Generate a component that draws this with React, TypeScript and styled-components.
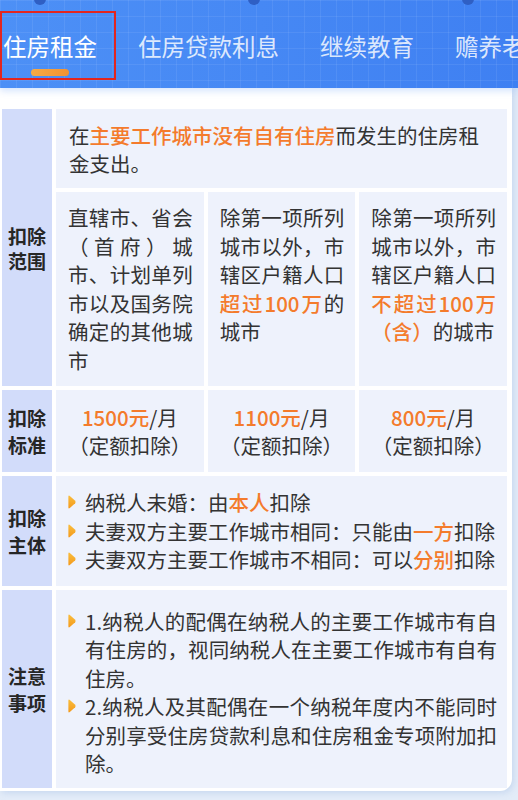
import React from 'react';
import styled, { createGlobalStyle } from 'styled-components';

const Global = createGlobalStyle`
  html, body { margin: 0; padding: 0; background: #e3ecf8; }
  body { font-family: "Noto Sans CJK SC", "Noto Sans", sans-serif; color: #333333; }
  * { box-sizing: border-box; }
`;

const Page = styled.div`
  width: 518px;
  height: 800px;
  overflow: hidden;
  position: relative;
  background: #e3ecf8;
`;

const Header = styled.header`
  position: relative;
  height: 88px;
  overflow: hidden;
  z-index: 1;
  background-color: #4285f4;
  background-image:
    linear-gradient(rgba(255, 255, 255, 0.07) 1px, transparent 1px),
    linear-gradient(90deg, rgba(255, 255, 255, 0.07) 1px, transparent 1px),
    linear-gradient(90deg, #4d90f6, #3f80f2);
  background-size: 16px 16px, 16px 16px, 100% 100%;
  box-shadow: 0 3px 7px rgba(66, 133, 244, 0.22);
`;

const Ring = styled.span<{ $left: number }>`
  position: absolute;
  top: -7px;
  left: ${(p) => p.$left}px;
  width: 12px;
  height: 12px;
  border-radius: 50%;
  background: #2f5fc4;
`;

const TabList = styled.nav`
  display: flex;
  gap: 41px;
  padding: 30px 0 0 3px;
  white-space: nowrap;
`;

const Tab = styled.div<{ $active?: boolean }>`
  display: flex;
  flex-direction: column;
  align-items: center;
  flex-shrink: 0;
  font-size: 23.5px;
  line-height: 32px;
  color: ${(p) => (p.$active ? '#ffffff' : 'rgba(255,255,255,0.82)')};
`;

const Indicator = styled.span`
  margin-top: 7px;
  width: 38px;
  height: 7px;
  border-radius: 4px;
  background: linear-gradient(90deg, #f7ab45, #f39232);
`;

const Highlight = styled.div`
  position: absolute;
  left: 0;
  top: 11px;
  width: 116px;
  height: 69px;
  border: 2px solid #e3261f;
  pointer-events: none;
`;

const Card = styled.section`
  width: 512px;
  background: #ffffff;
  padding: 21px 5px 3px 2px;
  border-bottom-right-radius: 12px;
  box-shadow: 2px 2px 6px rgba(150, 180, 225, 0.35);
`;

const Table = styled.div`
  display: grid;
  grid-template-columns: 50px repeat(3, 1fr);
  gap: 4px;
`;

const Label = styled.div<{ $rows?: number; $lh?: number }>`
  grid-row: span ${(p) => p.$rows ?? 1};
  background: #d2dcfa;
  display: flex;
  align-items: center;
  justify-content: center;
  text-align: center;
  font-size: 19px;
  font-weight: 700;
  line-height: ${(p) => p.$lh ?? 25}px;
  color: #262626;
`;

const Cell = styled.div`
  background: #eef2fc;
  font-size: 20.5px;
`;

const Desc = styled(Cell)`
  grid-column: span 3;
  padding: 12px 13px 11px;
  line-height: 28px;
`;

const ColText = styled(Cell)`
  padding: 11px 11px 12px 12px;
  line-height: 28.5px;
  text-align: justify;
`;

const Amount = styled(Cell)`
  padding: 13px 6px;
  line-height: 28px;
  text-align: center;
`;

const Wide = styled(Cell)<{ $pad: string }>`
  grid-column: span 3;
  padding: ${(p) => p.$pad};
  line-height: 28.5px;
  display: flex;
  flex-direction: column;
`;

const Item = styled.div`
  display: flex;
  align-items: flex-start;
  gap: 9px;
`;

const BulletBox = styled.span`
  flex: 0 0 8px;
  height: 28.5px;
  display: flex;
  align-items: center;
`;

const ItemText = styled.span`
  flex: 1;
  text-align: justify;
`;

const Em = styled.span`
  color: #f47b2c;
  font-weight: 500;
`;

const Bullet = () => (
  <BulletBox>
    <svg width="8" height="14" viewBox="0 0 8 14">
      <defs>
        <linearGradient id="bg" x1="0" y1="0" x2="0" y2="1">
          <stop offset="0" stopColor="#f9bd3c" />
          <stop offset="1" stopColor="#f49a1c" />
        </linearGradient>
      </defs>
      <path d="M0.4 1.6 Q0.4 0 1.8 0.9 L7.2 5.8 Q8 7 7.2 8.2 L1.8 13.1 Q0.4 14 0.4 12.4 Z" fill="url(#bg)" />
    </svg>
  </BulletBox>
);

export default function App() {
  return (
    <Page>
      <Global />
      <Header>
        <Ring $left={34} />
        <Ring $left={248} />
        <Ring $left={462} />
        <TabList>
          <Tab $active>
            住房租金
            <Indicator />
          </Tab>
          <Tab>住房贷款利息</Tab>
          <Tab>继续教育</Tab>
          <Tab>赡养老人</Tab>
        </TabList>
        <Highlight />
      </Header>
      <Card>
        <Table>
          <Label $rows={2}>
            扣除
            <br />
            范围
          </Label>
          <Desc>
            在<Em>主要工作城市没有自有住房</Em>而发生的住房租金支出。
          </Desc>
          <ColText>直辖市、省会（首府）城市、计划单列市以及国务院确定的其他城市</ColText>
          <ColText>
            除第一项所列城市以外，市辖区户籍人口<Em>超过100万</Em>的城市
          </ColText>
          <ColText>
            除第一项所列城市以外，市辖区户籍人口<Em>不超过100万（含）</Em>的城市
          </ColText>

          <Label $lh={27}>
            扣除
            <br />
            标准
          </Label>
          <Amount>
            <Em>1500元</Em>/月
            <br />
            （定额扣除）
          </Amount>
          <Amount>
            <Em>1100元</Em>/月
            <br />
            （定额扣除）
          </Amount>
          <Amount>
            <Em>800元</Em>/月
            <br />
            （定额扣除）
          </Amount>

          <Label $lh={27}>
            扣除
            <br />
            主体
          </Label>
          <Wide $pad="12px 8px 12px 12px">
            <Item>
              <Bullet />
              <ItemText>
                纳税人未婚：由<Em>本人</Em>扣除
              </ItemText>
            </Item>
            <Item>
              <Bullet />
              <ItemText>
                夫妻双方主要工作城市相同：只能由<Em>一方</Em>扣除
              </ItemText>
            </Item>
            <Item>
              <Bullet />
              <ItemText>
                夫妻双方主要工作城市不相同：可以<Em>分别</Em>扣除
              </ItemText>
            </Item>
          </Wide>

          <Label $lh={27}>
            注意
            <br />
            事项
          </Label>
          <Wide $pad="17px 10px 10px 12px">
            <Item>
              <Bullet />
              <ItemText>
                1.纳税人的配偶在纳税人的主要工作城市有自有住房的，视同纳税人在主要工作城市有自有住房。
              </ItemText>
            </Item>
            <Item>
              <Bullet />
              <ItemText>
                2.纳税人及其配偶在一个纳税年度内不能同时分别享受住房贷款利息和住房租金专项附加扣除。
              </ItemText>
            </Item>
          </Wide>
        </Table>
      </Card>
    </Page>
  );
}
